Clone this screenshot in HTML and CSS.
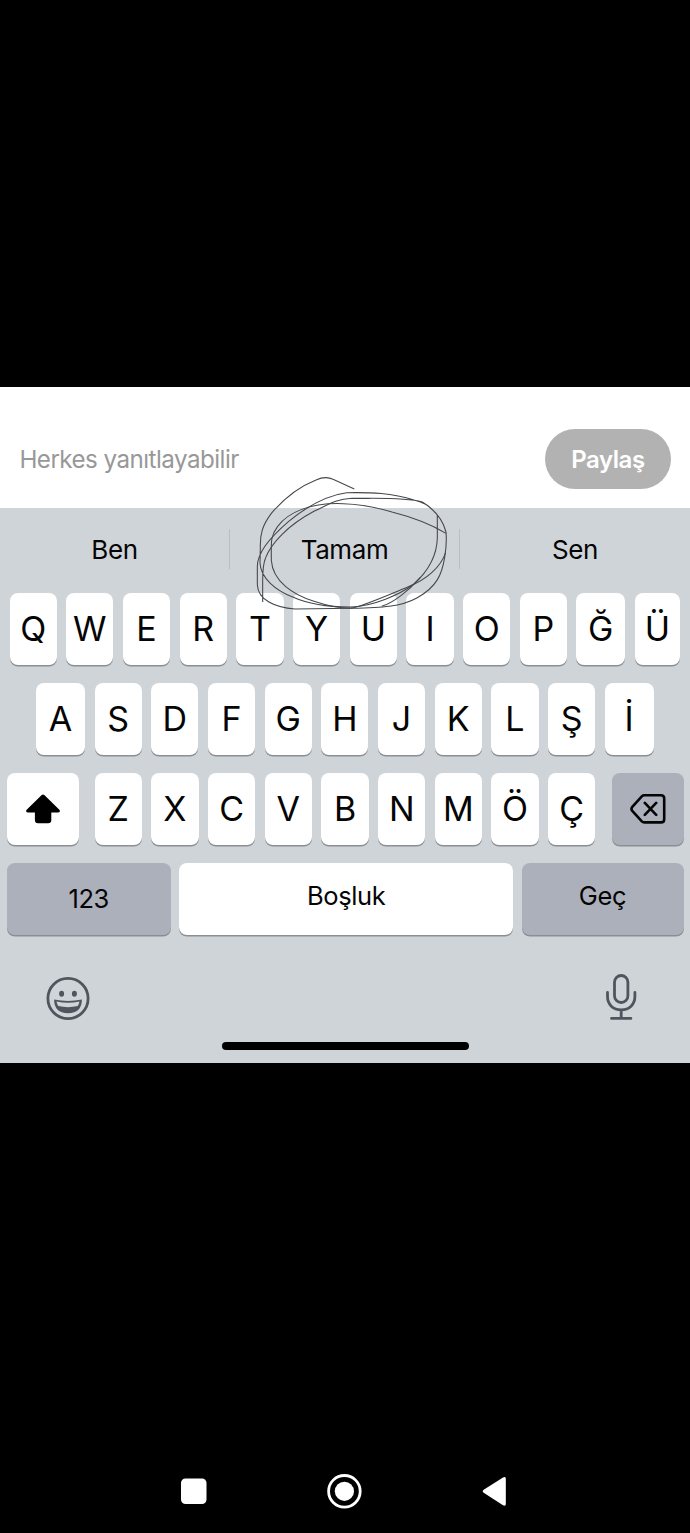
FILE: index.html
```html
<!DOCTYPE html>
<html lang="tr">
<head>
<meta charset="utf-8">
<title>Klavye</title>
<link rel="stylesheet" href="styles.css">
</head>
<body>
<main class="screen">
  <header class="composer">
    <span class="audience">Herkes yanıtlayabilir</span>
    <button class="share"><span class="share-label">Paylaş</span></button>
  </header>
  <section class="keyboard">
    <div class="suggestions">
      <span class="suggestion">Ben</span>
      <span class="suggestion middle">Tamam</span>
      <span class="suggestion">Sen</span>
      <svg class="scribble" viewBox="0 0 660 480" aria-hidden="true">
        <path d="M343 72 L279 43 Q257 32 228 45 C175 66 128 105 94 145 C67 181 60 207 61 247 L60 294 C62 340 108 377 158 396 C211 420 265 426 330 426 C400 425 480 388 522 357 C577 307 591 256 592 219 L592 150 C565 119 548 111 522 105 C455 83 393 82 320 83 C255 91 194 130 146 169 C84 223 52 265 52 305 L52 359 C54 405 105 428 165 432 L335 430 C424 428 482 426 532 398 C590 366 606 328 614 277 Q621 237 618 201 C609 166 583 133 547 111 C492 96 402 101 336 100 C290 103 272 115 222 139 C143 181 94 235 77 278 C67 300 68 332 68 355 L68 411"/>
        <path d="M618 205 C583 184 531 160 456 141 C407 126 371 118 310 116 C210 112 143 143 113 184 C90 214 94 234 94 286 C98 350 160 390 222 409 C273 426 309 430 332 430 C367 424 420 400 505 365 C558 345 602 307 617 263"/>
        <path d="M541 337 C505 379 458 414 425 424"/>
      </svg>
    </div>
    <div class="row row-top">
      <span class="key">Q</span><span class="key">W</span><span class="key">E</span><span class="key">R</span><span class="key">T</span><span class="key">Y</span><span class="key">U</span><span class="key">I</span><span class="key">O</span><span class="key">P</span><span class="key g">Ğ</span><span class="key u">Ü</span>
    </div>
    <div class="row row-home">
      <span class="key edge">A</span><span class="key">S</span><span class="key">D</span><span class="key">F</span><span class="key">G</span><span class="key">H</span><span class="key">J</span><span class="key">K</span><span class="key">L</span><span class="key">Ş</span><span class="key edge">İ</span>
    </div>
    <div class="row row-lower">
      <span class="key wide">
        <svg width="36" height="32" viewBox="0 0 36 32" aria-hidden="true"><path d="M16.7 2.1Q18 .8 19.3 2.1L34.6 17Q35.6 19.2 33 19.4H26.3V27Q26.3 30.2 23.1 30.2H13.1Q9.9 30.2 9.9 27V19.4H3Q.4 19.2 1.4 17Z"/></svg>
      </span>
      <span class="letters"><span class="key">Z</span><span class="key">X</span><span class="key">C</span><span class="key">V</span><span class="key">B</span><span class="key">N</span><span class="key">M</span><span class="key">Ö</span><span class="key">Ç</span></span>
      <span class="key wide dark">
        <svg class="line-icon" width="36" height="30" viewBox="0 0 36 30" aria-hidden="true"><path d="M14.2 1.3H31Q34.2 1.3 34.2 4.5V25.2Q34.2 28.4 31 28.4H14.2Q12.9 28.4 11.8 27.4L2.3 16.9Q.7 14.9 2.3 12.9L11.8 2.4Q12.9 1.3 14.2 1.3ZM14.8 8.9L26.2 20.9M26.2 8.9L14.8 20.9"/></svg>
      </span>
    </div>
    <div class="row row-space">
      <span class="key dark numbers">123</span>
      <span class="key space">Boşluk</span>
      <span class="key dark go">Geç</span>
    </div>
    <div class="tools">
      <svg width="44" height="44" viewBox="0 0 44 44" aria-hidden="true">
        <circle class="tool-line" cx="22" cy="22.5" r="20.1"/>
        <ellipse class="tool-fill" cx="15.6" cy="17.8" rx="2.5" ry="3"/>
        <ellipse class="tool-fill" cx="28.4" cy="17.8" rx="2.5" ry="3"/>
        <path class="tool-fill" fill-rule="evenodd" d="M8.1 23.5Q22 26.3 35.9 23.5Q35.8 37.2 22 37.2Q8.2 37.2 8.1 23.5ZM10.5 25.5Q11 28.2 12.3 30Q22 32.3 31.7 30Q33 28.2 33.5 25.5Q22 28 10.5 25.5Z"/>
      </svg>
      <svg class="mic" width="32" height="48" viewBox="0 0 32 48" aria-hidden="true"><path class="tool-line" d="M9.5 8.2a6.7 6.7 0 0 1 13.4 0v13.6a6.7 6.7 0 0 1-13.4 0ZM2.5 18.5v4.1c0 8 5.6 13.2 13.7 13.2s13.7-5.2 13.7-13.2v-4.1M16.2 35.8v8.6M6.5 44.4h19.4"/></svg>
    </div>
    <div class="home-bar"></div>
  </section>
  <nav class="system-nav">
    <svg width="314" height="36" viewBox="0 0 314 36" aria-hidden="true">
      <rect x="0" y="5.5" width="25.5" height="25.5" rx="4.5"/>
      <circle class="ring" cx="163.4" cy="18.3" r="15.8"/>
      <circle cx="163.4" cy="18.3" r="9.6"/>
      <path d="M302.3 17Q301 18.3 302.3 19.6L322 32.3Q324.8 33.6 324.8 31.1V5.5Q324.8 3 322 4.4Z"/>
    </svg>
  </nav>
</main>
</body>
</html>
```
FILE: styles.css
```css
body {
  margin: 0;
  background: #000;
  font-family: Inter, "Liberation Sans", sans-serif;
}

.screen {
  box-sizing: border-box;
  height: 1533px;
  padding-top: 387px;
  display: flex;
  flex-direction: column;
  overflow: hidden;
}

.composer {
  box-sizing: border-box;
  height: 121px;
  padding: 42px 19px 19px 19.4px;
  background: #fff;
  display: flex;
  justify-content: space-between;
  align-items: flex-start;
}

.audience {
  color: #989898;
  font-size: 24.2px;
  line-height: 62px;
  letter-spacing: -.54px;
}

.share {
  width: 126px;
  height: 60px;
  padding: 2px 0 0;
  border: 0;
  border-radius: 30px;
  background: #b2b2b2;
  color: #fff;
  font: 600 24px/58px Inter, sans-serif;
  letter-spacing: -.45px;
}

.keyboard {
  box-sizing: border-box;
  height: 555px;
  background: #cfd4d9;
  color: #050505;
  display: flex;
  flex-direction: column;
}

.suggestions {
  height: 85px;
  display: grid;
  grid-template-columns: 229px 1fr 230px;
  align-items: start;
  position: relative;
}

.suggestion {
  height: 40px;
  margin-top: 21px;
  text-align: center;
  font-size: 26px;
  line-height: 42px;
  letter-spacing: -.4px;
}

.middle {
  border: solid #b9bec4;
  border-width: 0 1px;
}

.scribble {
  position: absolute;
  left: 240px;
  top: -43px;
  width: 220px;
  height: 160px;
  fill: none;
  stroke: #45484b;
  stroke-width: 3.2;
  stroke-linejoin: round;
}

.row {
  height: 72px;
  margin-bottom: 18px;
  display: flex;
  gap: 9.5px;
}

.row-top {
  padding-left: 9.6px;
}

.row-home {
  padding-left: 36px;
}

.row-lower {
  padding: 0 6.5px;
  justify-content: space-between;
  gap: 0;
}

.row-space {
  padding: 0 6.5px;
  gap: 8.4px;
}

.key {
  box-sizing: border-box;
  width: 47.2px;
  height: 72px;
  flex: none;
  display: flex;
  align-items: center;
  justify-content: center;
  border-radius: 8px;
  background: #fff;
  box-shadow: 0 1.5px 0 #8b8e92;
  font-size: 34px;
  padding-bottom: 1px;
}

.g {
  width: 48.6px;
}

.u {
  width: 45.6px;
}

.edge {
  width: 49px;
}

.letters {
  display: flex;
  gap: 9.5px;
}

.wide {
  width: 72px;
  padding-bottom: 0;
}

.dark {
  background: #abb0bb;
}

.numbers,
.space,
.go {
  font-size: 25.5px;
  letter-spacing: -.4px;
  padding-bottom: 7px;
}

.numbers {
  width: 164.3px;
  padding-bottom: 2px;
}

.space {
  flex: 1;
}

.go {
  width: 162px;
}

.line-icon {
  fill: none;
  stroke: #050505;
  stroke-width: 2.6;
  stroke-linecap: round;
}

.tools {
  height: 55px;
  padding: 23px 53px 0 46px;
  display: flex;
  justify-content: space-between;
  align-items: flex-start;
}

.mic {
  margin-top: -2px;
}

.tool-line {
  fill: none;
  stroke: #50555d;
  stroke-width: 2.8;
  stroke-linecap: round;
}

.tool-fill {
  fill: #50555d;
}

.home-bar {
  width: 247px;
  height: 8px;
  margin: 11px 0 0 221.5px;
  border-radius: 4px;
  background: #000;
}

.system-nav {
  padding: 410px 0 0 181px;
}

.system-nav svg {
  display: block;
  fill: #fff;
  overflow: visible;
}

.system-nav .ring {
  fill: none;
  stroke: #fff;
  stroke-width: 2.8;
}
```
